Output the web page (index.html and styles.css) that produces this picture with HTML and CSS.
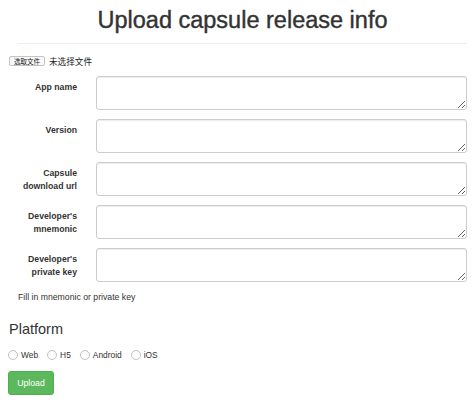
FILE: index.html
```html
<!DOCTYPE html>
<html lang="en">
<head>
<meta charset="utf-8">
<title>Upload capsule release info</title>
<link rel="stylesheet" href="styles.css">
</head>
<body>
<div class="page">
  <h1 class="title">Upload capsule release info</h1>
  <hr class="divider">
  <div class="file-row">
    <span class="file-btn">选取文件</span>
    <span class="file-name">未选择文件</span>
  </div>
  <form class="form">
    <div class="form-group">
      <label class="label">App name</label>
      <textarea class="field"></textarea>
    </div>
    <div class="form-group">
      <label class="label">Version</label>
      <textarea class="field"></textarea>
    </div>
    <div class="form-group">
      <label class="label">Capsule download url</label>
      <textarea class="field"></textarea>
    </div>
    <div class="form-group">
      <label class="label">Developer's mnemonic</label>
      <textarea class="field"></textarea>
    </div>
    <div class="form-group">
      <label class="label">Developer's private key</label>
      <textarea class="field"></textarea>
    </div>
    <p class="help">Fill in mnemonic or private key</p>
    <h3 class="section">Platform</h3>
    <div class="radios">
      <label class="radio"><input type="radio" name="platform"><span>Web</span></label>
      <label class="radio"><input type="radio" name="platform"><span>H5</span></label>
      <label class="radio"><input type="radio" name="platform"><span>Android</span></label>
      <label class="radio"><input type="radio" name="platform"><span>iOS</span></label>
    </div>
    <button type="button" class="btn-upload">Upload</button>
  </form>
</div>
</body>
</html>
```
FILE: styles.css
```css
* { box-sizing: border-box; }
html, body { margin: 0; padding: 0; background: #fff; }
body {
  font-family: "Liberation Sans", Arial, "Noto Sans CJK SC", sans-serif;
  font-size: 8.7px;
  color: #333;
}
.page { padding: 0 7px 0 8px; }
.title {
  margin: 7px 0 0 10px;
  font-size: 23.5px;
  line-height: 26px;
  font-weight: 400;
  text-align: center;
  color: #333;
  -webkit-text-stroke: 0.4px #333;
}
.divider {
  margin: 10px 0 0 10px;
  border: 0;
  border-top: 1px solid #eee;
  height: 0;
}
.file-row {
  display: flex;
  align-items: center;
  height: 12px;
  margin: 11px 0 0 1px;
  gap: 4px;
}
.file-btn {
  font-family: "Noto Sans CJK SC", sans-serif;
  font-size: 6.5px;
  line-height: 8px;
  padding: 0 4px;
  border: 1px solid #c4c4c4;
  border-radius: 2px;
  background: #f8f8f8;
  color: #222;
}
.file-name {
  font-family: "Noto Sans CJK SC", sans-serif;
  font-size: 8.6px;
  color: #222;
}
.form { margin: 9px 0 0 0; }
.form-group {
  display: flex;
  margin-bottom: 9px;
}
.label {
  width: 59px;
  margin-left: 10px;
  padding-top: 5px;
  text-align: right;
  font-weight: 700;
  line-height: 12.5px;
  flex: none;
}
.field {
  flex: 1;
  margin: 0 0 0 19px;
  height: 34px;
  border: 1px solid #ccc;
  border-radius: 3px;
  box-shadow: inset 0 1px 1px rgba(0,0,0,.075);
  font: inherit;
  padding: 4px 7px;
}
.help {
  margin: 0 0 0 10px;
  line-height: 12.5px;
}
.section {
  margin: 17px 0 0 1px;
  font-size: 14.5px;
  line-height: 16px;
  font-weight: 400;
}
.radios {
  display: flex;
  align-items: center;
  height: 13px;
  margin-top: 12px;
  gap: 9px;
  font-size: 8.4px;
}
.radio {
  display: flex;
  align-items: center;
  gap: 3px;
}
.radio input {
  appearance: none;
  -webkit-appearance: none;
  width: 10px;
  height: 10px;
  margin: 0;
  border: 1px solid #c2c2c2;
  border-radius: 50%;
  background: linear-gradient(#fafafa, #fff);
}
.btn-upload {
  display: block;
  margin-top: 9px;
  width: 46px;
  height: 24px;
  padding: 0;
  border: 1px solid #4cae4c;
  border-radius: 3px;
  background: #5cb85c;
  color: #fff;
  font: inherit;
}
```
